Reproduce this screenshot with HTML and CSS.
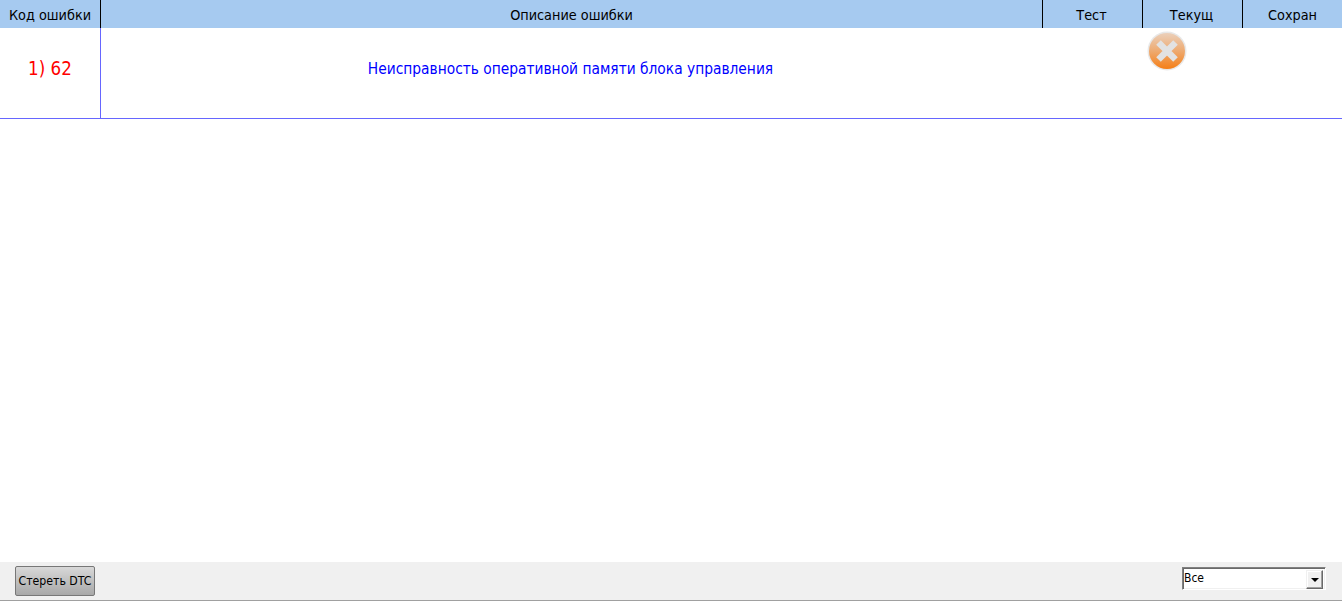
FILE: index.html
```html
<!DOCTYPE html>
<html lang="ru">
<head>
<meta charset="utf-8">
<title>DTC</title>
<link rel="stylesheet" href="styles.css">
</head>
<body>
<div class="page">
  <div class="grid header">
    <div class="hcell">Код ошибки</div>
    <div class="hcell">Описание ошибки</div>
    <div class="hcell narrow">Тест</div>
    <div class="hcell narrow">Текущ</div>
    <div class="hcell last">Сохран</div>
  </div>
  <div class="grid row">
    <div class="code">1) 62</div>
    <div class="desc">Неисправность оперативной памяти блока управления</div>
    <div class="flag"></div>
    <div class="flag">
      <svg class="icon" width="40" height="40" viewBox="0 0 40 40">
        <defs>
          <linearGradient id="orb" x1="0" y1="0" x2="0" y2="1">
            <stop offset="0" stop-color="#ebd0bb"/>
            <stop offset="0.5" stop-color="#eeaa70"/>
            <stop offset="1" stop-color="#f57f17"/>
          </linearGradient>
        </defs>
        <circle cx="20" cy="20" r="19.5" fill="#e8e8e8"/>
        <circle cx="20" cy="20" r="18" fill="url(#orb)"/>
        <path d="M11.5 11.5L28.5 28.5M28.5 11.5L11.5 28.5" stroke="#e2e2e2" stroke-width="6.5"/>
      </svg>
    </div>
    <div class="flag"></div>
  </div>
  <div class="spacer"></div>
  <div class="footer">
    <button class="erase" type="button">Стереть DTC</button>
    <div class="combo">
      <span class="combo-text">Все</span>
      <span class="combo-btn"><span class="arrow"></span></span>
    </div>
  </div>
</div>
</body>
</html>
```
FILE: styles.css
```css
* { box-sizing: border-box; }
html, body { margin: 0; padding: 0; height: 100%; background: #fff; overflow: hidden; }
body { font-family: "DejaVu Sans Condensed", "DejaVu Sans", sans-serif; color: #000; }
.page { display: flex; flex-direction: column; height: 601px; }
.grid { display: grid; grid-template-columns: 101px 942px 100px 100px 99px; }
.header { height: 28px; background: #a6caf0; }
.hcell { display: flex; align-items: center; justify-content: center; font-size: 14.3px; padding-top: 2px; border-right: 1px solid #000; }
.hcell.narrow { padding-right: 2px; }
.hcell.last { border-right: 0; }
.row { height: 91px; border-bottom: 1px solid #6666ff; }
.code { display: flex; align-items: center; justify-content: center; color: #f00; font-size: 18.6px; padding: 0 0 10px 0; border-right: 1px solid #6666ff; }
.desc { display: flex; align-items: center; justify-content: center; color: #00f; font-size: 15.35px; padding: 0 3px 9px 0; }
.flag { display: flex; justify-content: flex-start; align-items: flex-start; padding: 3px 0 0 4px; }
.icon { display: block; }
.spacer { flex: 1; }
.footer { height: 39px; display: flex; align-items: flex-start; justify-content: space-between; background: #f0f0f0; border-bottom: 1px solid #a0a0a0; padding: 4px 16px 0 15px; }
.erase { width: 80px; height: 30px; padding: 0; font: 12.2px "DejaVu Sans Condensed", "DejaVu Sans", sans-serif; color: #000; border: 1px solid #777; border-radius: 2px; background: linear-gradient(#d8d8d8, #a8a8a8); }
.combo { width: 144px; height: 23px; margin-top: 1px; display: flex; align-items: flex-start; justify-content: space-between; background: #fff; border: 1px solid; border-color: #808080 #fff #fff #808080; box-shadow: inset 1px 1px 0 #696969, inset -1px -1px 0 #f0f0f0; padding: 2px 2px 2px 1px; font-size: 12px; line-height: 17px; }
.combo-btn { width: 17px; height: 19px; display: flex; align-items: center; justify-content: center; background: #f0f0f0; border: 1px solid; border-color: #f0f0f0 #696969 #696969 #f0f0f0; box-shadow: inset -1px -1px 0 #a0a0a0, inset 1px 1px 0 #fff; }
.arrow { width: 0; height: 0; border-left: 4px solid transparent; border-right: 4px solid transparent; border-top: 4px solid #000; }
```
